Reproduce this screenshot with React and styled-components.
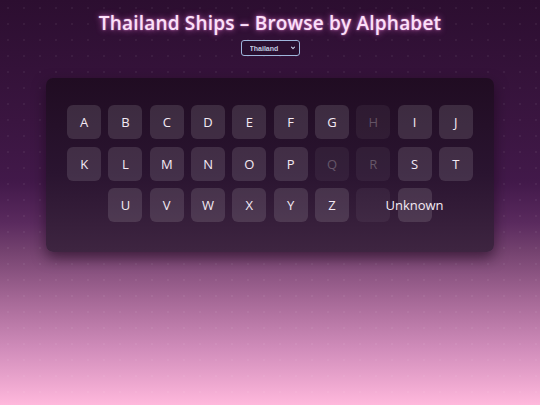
import { createGlobalStyle } from 'styled-components'
import styled from 'styled-components'

const letters = [
  ['A', true], ['B', true], ['C', true], ['D', true], ['E', true],
  ['F', true], ['G', true], ['H', false], ['I', true], ['J', true],
  ['K', true], ['L', true], ['M', true], ['N', true], ['O', true],
  ['P', true], ['Q', false], ['R', false], ['S', true], ['T', true],
  ['U', true], ['V', true], ['W', true], ['X', true], ['Y', true],
  ['Z', true], ['', false], ['Unknown', true],
]

const App = () => {
  return (
    <>
      <GlobalStyle />
      <Page>
        <Title>Thailand Ships – Browse by Alphabet</Title>
        <SelectWrap>
          <Select defaultValue="th">
            <option value="th">Thailand</option>
          </Select>
          <Chevron viewBox="0 0 8 8">
            <path d="M2.5 3.2 L4 4.7 L5.5 3.2" fill="none" stroke="#c8d0e8" strokeWidth="1.1" strokeLinecap="round" strokeLinejoin="round" />
          </Chevron>
        </SelectWrap>
        <Panel>
          <Keys>
            {letters.map(([label, active], i) => (
              <Key key={i} disabled={!active}>{label}</Key>
            ))}
          </Keys>
        </Panel>
      </Page>
    </>
  )
}

export default App

const GlobalStyle = createGlobalStyle`
  html, body {
    margin: 0;
    padding: 0;
  }
  body {
    font-family: "Open Sans", "Noto Sans", sans-serif;
  }
`

const Page = styled.main`
  width: 540px;
  height: 405px;
  box-sizing: border-box;
  display: flex;
  flex-direction: column;
  align-items: center;
  padding-top: 10px;
  background:
    radial-gradient(rgba(255, 255, 255, 0.07) 0.6px, transparent 1px) 0 0 / 16px 16px,
    linear-gradient(to bottom, #2c0e30 0%, #3a1540 30%, #42194a 45%, #5a2a5e 55%, #74426f 62%, #a56896 74%, #d08cba 86%, #ffb8dc 100%);
  overflow: hidden;
`

const Title = styled.h1`
  margin: 0;
  font-size: 19px;
  font-weight: 600;
  letter-spacing: 0.2px;
  line-height: 26px;
  color: #fbe0f9;
  text-shadow: 0 0 6px rgba(255, 120, 230, 0.7), 0 0 2px rgba(255, 180, 240, 0.6);
`

const SelectWrap = styled.div`
  position: relative;
  margin-top: 4px;
  display: flex;
`

const Select = styled.select`
  appearance: none;
  -webkit-appearance: none;
  width: 59px;
  height: 16px;
  padding: 0 10px 0 8px;
  font-family: "Liberation Sans", sans-serif;
  font-size: 7px;
  font-weight: 700;
  color: #c0cae0;
  background: #2a0f30;
  border: 1px solid #9fb6dc;
  border-radius: 3px;
  outline: none;
`

const Chevron = styled.svg`
  position: absolute;
  right: 3px;
  top: 4px;
  width: 8px;
  height: 8px;
  pointer-events: none;
`

const Panel = styled.section`
  margin-top: 22px;
  width: 448px;
  box-sizing: border-box;
  padding: 27px 21px 30px;
  border-radius: 7px;
  background: linear-gradient(to bottom, #200c22 0%, #2a1430 55%, #3e2541 100%);
  box-shadow: 0 6px 14px rgba(20, 0, 20, 0.55);
`

const Keys = styled.div`
  display: flex;
  flex-wrap: wrap;
  justify-content: center;
  column-gap: 7.3px;
  row-gap: 7.5px;
`

const Key = styled.button`
  width: 34px;
  height: 34px;
  padding: 0;
  border: none;
  border-radius: 6px;
  display: flex;
  align-items: center;
  justify-content: center;
  white-space: nowrap;
  overflow: visible;
  font-family: "Open Sans", "Noto Sans", sans-serif;
  font-size: 13px;
  font-weight: 500;
  color: ${p => (p.disabled ? 'rgba(255, 255, 255, 0.25)' : '#f4eaf4')};
  background: ${p => (p.disabled ? 'rgba(255, 255, 255, 0.05)' : 'rgba(255, 255, 255, 0.12)')};
  cursor: ${p => (p.disabled ? 'default' : 'pointer')};
`
